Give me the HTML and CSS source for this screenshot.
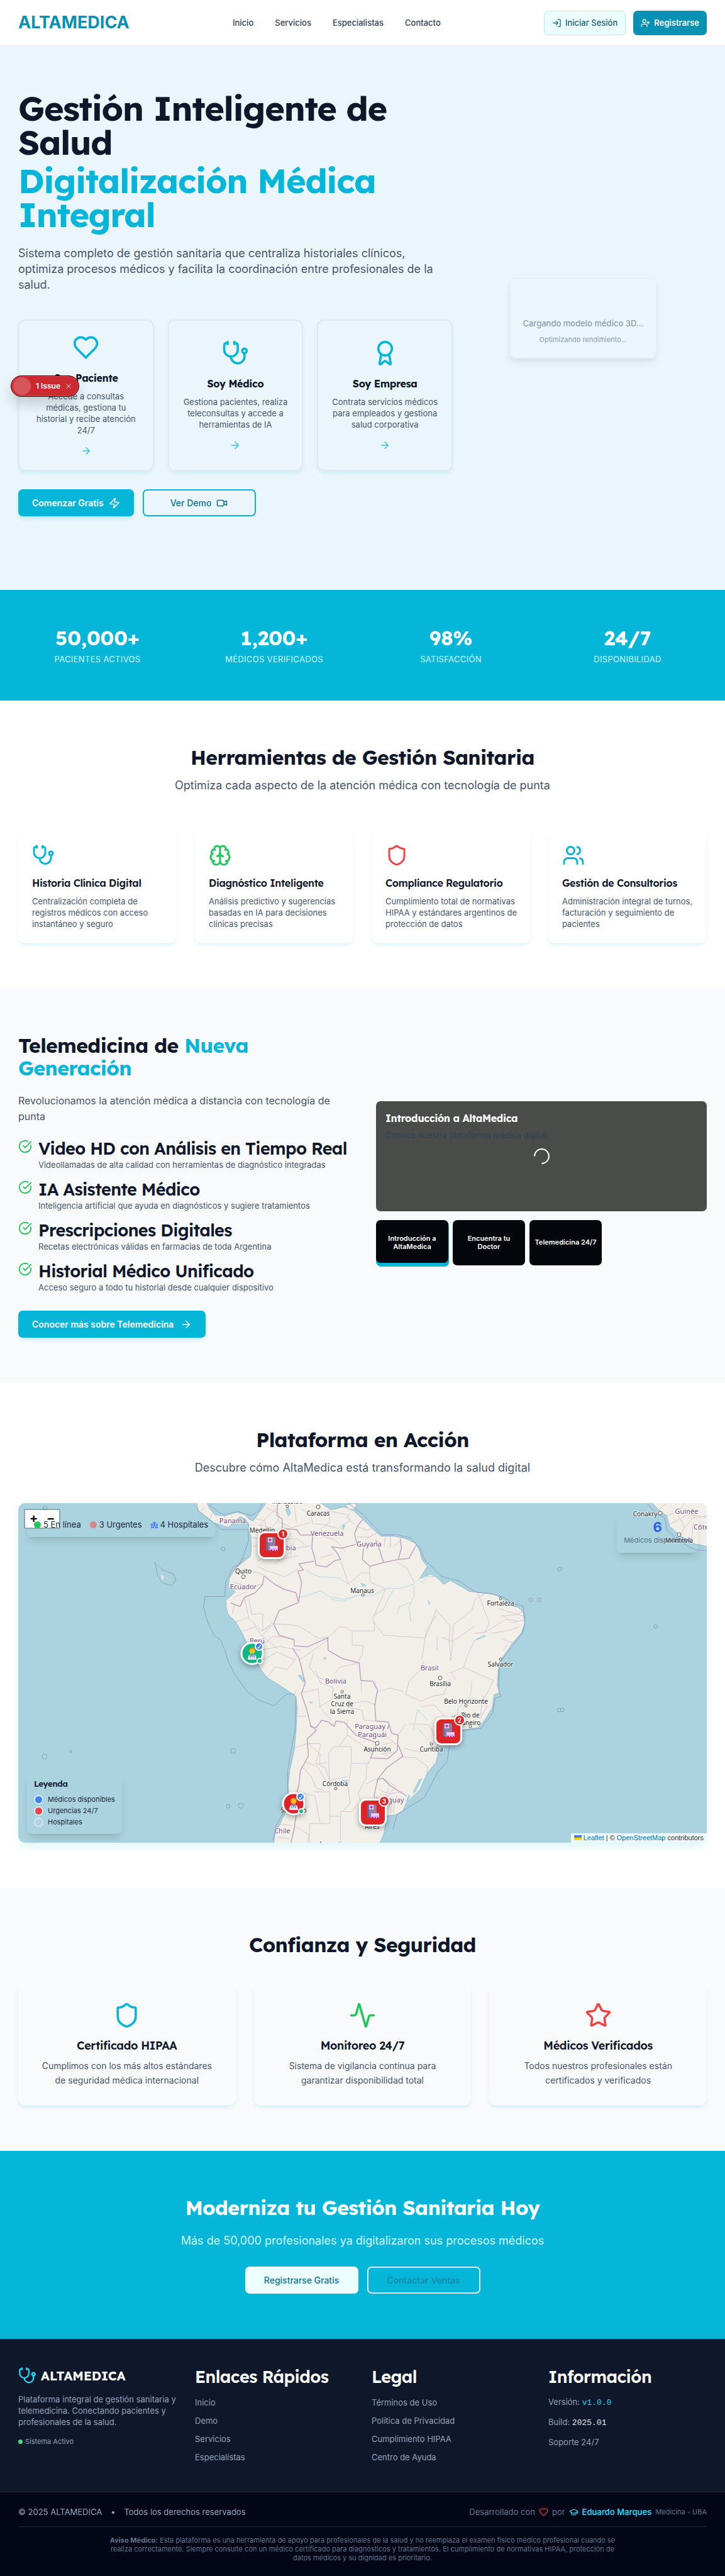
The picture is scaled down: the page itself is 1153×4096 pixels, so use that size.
FILE: index.html
```html
<!DOCTYPE html>
<html lang="es">
<head>
<meta charset="utf-8">
<meta name="viewport" content="width=device-width, initial-scale=1">
<title>ALTAMEDICA</title>
<link rel="stylesheet" href="styles.css">
</head>
<body>
<svg class="sprite" aria-hidden="true">
  <symbol id="i-login" viewBox="0 0 24 24"><path d="M15 3h4a2 2 0 0 1 2 2v14a2 2 0 0 1-2 2h-4M10 17l5-5-5-5M15 12H3"/></symbol>
  <symbol id="i-userplus" viewBox="0 0 24 24"><path d="M16 21v-2a4 4 0 0 0-4-4H6a4 4 0 0 0-4 4v2M19 8v6M22 11h-6"/><circle cx="9" cy="7" r="4"/></symbol>
  <symbol id="i-heart" viewBox="0 0 24 24"><path d="M19 14c1.490-1.460 3-3.210 3-5.500A5.500 5.500 0 0 0 16.500 3c-1.760 0-3 .5-4.500 2-1.500-1.500-2.740-2-4.500-2A5.500 5.500 0 0 0 2 8.500c0 2.300 1.500 4.050 3 5.500l7 7Z"/></symbol>
  <symbol id="i-steth" viewBox="0 0 24 24"><path d="M11 2v2M5 2v2M5 3H4a2 2 0 0 0-2 2v4a6 6 0 0 0 12 0V5a2 2 0 0 0-2-2h-1M8 15a6 6 0 0 0 12 0v-3"/><circle cx="20" cy="10" r="2"/></symbol>
  <symbol id="i-award" viewBox="0 0 24 24"><path d="m15.477 12.890 1.515 8.526a.5.5 0 0 1-.81.47l-3.580-2.687a1 1 0 0 0-1.197 0l-3.586 2.686a.5.5 0 0 1-.81-.469l1.514-8.526"/><circle cx="12" cy="8" r="6"/></symbol>
  <symbol id="i-arrow" viewBox="0 0 24 24"><path d="M5 12h14M12 5l7 7-7 7"/></symbol>
  <symbol id="i-zap" viewBox="0 0 24 24"><path d="M4 14a1 1 0 0 1-.78-1.630l9.900-10.200a.5.5 0 0 1 .86.46l-1.920 6.020A1 1 0 0 0 13 10h7a1 1 0 0 1 .78 1.630l-9.900 10.200a.5.5 0 0 1-.86-.46l1.920-6.020A1 1 0 0 0 11 14z"/></symbol>
  <symbol id="i-video" viewBox="0 0 24 24"><path d="m16 13 5.223 3.482a.5.5 0 0 0 .777-.416V7.870a.5.5 0 0 0-.752-.432L16 10.500"/><rect x="2" y="6" width="14" height="12" rx="2"/></symbol>
  <symbol id="i-brain" viewBox="0 0 24 24"><path d="M12 5a3 3 0 1 0-5.997.125 4 4 0 0 0-2.526 5.770 4 4 0 0 0 .556 6.588A4 4 0 1 0 12 18ZM12 5a3 3 0 1 1 5.997.125 4 4 0 0 1 2.526 5.770 4 4 0 0 1-.556 6.588A4 4 0 1 1 12 18ZM15 13a4.500 4.500 0 0 1-3-4 4.500 4.500 0 0 1-3 4M17.599 6.500a3 3 0 0 0 .399-1.375M6.003 5.125A3 3 0 0 0 6.401 6.500M3.477 10.896a4 4 0 0 1 .585-.396M19.938 10.500a4 4 0 0 1 .585.396M6 18a4 4 0 0 1-1.967-.516M19.967 17.484A4 4 0 0 1 18 18"/></symbol>
  <symbol id="i-shield" viewBox="0 0 24 24"><path d="M20 13c0 5-3.500 7.500-7.660 8.950a1 1 0 0 1-.67-.01C7.500 20.500 4 18 4 13V6a1 1 0 0 1 1-1c2 0 4.500-1.200 6.240-2.720a1.170 1.170 0 0 1 1.520 0C14.510 3.810 17 5 19 5a1 1 0 0 1 1 1z"/></symbol>
  <symbol id="i-users" viewBox="0 0 24 24"><path d="M16 21v-2a4 4 0 0 0-4-4H6a4 4 0 0 0-4 4v2M22 21v-2a4 4 0 0 0-3-3.870M16 3.130a4 4 0 0 1 0 7.750"/><circle cx="9" cy="7" r="4"/></symbol>
  <symbol id="i-check" viewBox="0 0 24 24"><path d="M21.801 10A10 10 0 1 1 17 3.335M9 11l3 3L22 4"/></symbol>
  <symbol id="i-activity" viewBox="0 0 24 24"><path d="M22 12h-2.480a2 2 0 0 0-1.930 1.460l-2.350 8.360a.25.25 0 0 1-.48 0L9.240 2.180a.25.25 0 0 0-.48 0l-2.350 8.360A2 2 0 0 1 4.490 12H2"/></symbol>
  <symbol id="i-star" viewBox="0 0 24 24"><path d="M11.525 2.295a.53.53 0 0 1 .95 0l2.310 4.679a2.123 2.123 0 0 0 1.595 1.160l5.166.756a.53.53 0 0 1 .294.904l-3.736 3.638a2.123 2.123 0 0 0-.611 1.878l.882 5.140a.53.53 0 0 1-.771.56l-4.618-2.428a2.122 2.122 0 0 0-1.973 0L6.396 21.010a.53.53 0 0 1-.77-.56l.881-5.139a2.122 2.122 0 0 0-.611-1.879L2.160 9.795a.53.53 0 0 1 .294-.906l5.165-.755a2.122 2.122 0 0 0 1.597-1.160z"/></symbol>
  <symbol id="i-cap" viewBox="0 0 24 24"><path d="M21.420 10.922a1 1 0 0 0-.019-1.838L12.830 5.180a2 2 0 0 0-1.660 0L2.600 9.080a1 1 0 0 0 0 1.832l8.570 3.908a2 2 0 0 0 1.660 0zM22 10v6M6 12.500V16a6 3 0 0 0 12 0v-3.500"/></symbol>
  <symbol id="i-close" viewBox="0 0 24 24"><path d="M4 4l16 16M20 4L4 20"/></symbol>
</svg>

<header class="topbar">
  <a class="brand" href="#">ALTAMEDICA</a>
  <nav class="nav">
    <a href="#">Inicio</a><a href="#">Servicios</a><a href="#">Especialistas</a><a href="#">Contacto</a>
  </nav>
  <div class="actions">
    <button class="btn-sm btn-login"><svg class="icon"><use href="#i-login"/></svg>Iniciar Sesión</button>
    <button class="btn-sm btn-register"><svg class="icon"><use href="#i-userplus"/></svg>Registrarse</button>
  </div>
</header>

<main>
<section class="hero">
  <div class="hero-copy">
    <h1>Gestión Inteligente de Salud <span>Digitalización Médica Integral</span></h1>
    <p class="lead">Sistema completo de gestión sanitaria que centraliza historiales clínicos, optimiza procesos médicos y facilita la coordinación entre profesionales de la salud.</p>
    <div class="roles">
      <a class="role" href="#"><svg class="icon xl"><use href="#i-heart"/></svg><h2>Soy Paciente</h2><p>Accede a consultas médicas, gestiona tu historial y recibe atención 24/7</p><svg class="icon md"><use href="#i-arrow"/></svg></a>
      <a class="role" href="#"><svg class="icon xl"><use href="#i-steth"/></svg><h2>Soy Médico</h2><p>Gestiona pacientes, realiza teleconsultas y accede a herramientas de IA</p><svg class="icon md"><use href="#i-arrow"/></svg></a>
      <a class="role" href="#"><svg class="icon xl"><use href="#i-award"/></svg><h2>Soy Empresa</h2><p>Contrata servicios médicos para empleados y gestiona salud corporativa</p><svg class="icon md"><use href="#i-arrow"/></svg></a>
    </div>
    <div class="buttons">
      <button class="btn btn-primary">Comenzar Gratis<svg class="icon md"><use href="#i-zap"/></svg></button>
      <button class="btn btn-outline">Ver Demo<svg class="icon md"><use href="#i-video"/></svg></button>
    </div>
  </div>
  <div class="loader">
    <p>Cargando modelo médico 3D...</p>
    <small>Optimizando rendimiento...</small>
  </div>
  <div class="issue">
    <span class="issue-dot"></span><span>1 Issue</span><button aria-label="Cerrar"><svg class="icon"><use href="#i-close"/></svg></button>
  </div>
</section>

<section class="stats">
  <div><strong>50,000+</strong><span>Pacientes Activos</span></div>
  <div><strong>1,200+</strong><span>Médicos Verificados</span></div>
  <div><strong>98%</strong><span>Satisfacción</span></div>
  <div><strong>24/7</strong><span>Disponibilidad</span></div>
</section>

<section class="section">
  <h2 class="title">Herramientas de Gestión Sanitaria</h2>
  <p class="subtitle">Optimiza cada aspecto de la atención médica con tecnología de punta</p>
  <div class="features">
    <article class="card"><svg class="icon lg cyan"><use href="#i-steth"/></svg><h3>Historia Clínica Digital</h3><p>Centralización completa de registros médicos con acceso instantáneo y seguro</p></article>
    <article class="card"><svg class="icon lg green"><use href="#i-brain"/></svg><h3>Diagnóstico Inteligente</h3><p>Análisis predictivo y sugerencias basadas en IA para decisiones clínicas precisas</p></article>
    <article class="card"><svg class="icon lg red"><use href="#i-shield"/></svg><h3>Compliance Regulatorio</h3><p>Cumplimiento total de normativas HIPAA y estándares argentinos de protección de datos</p></article>
    <article class="card"><svg class="icon lg cyan"><use href="#i-users"/></svg><h3>Gestión de Consultorios</h3><p>Administración integral de turnos, facturación y seguimiento de pacientes</p></article>
  </div>
</section>

<section class="section soft tele">
  <div>
    <h2 class="title">Telemedicina de <span>Nueva Generación</span></h2>
    <p class="tele-lead">Revolucionamos la atención médica a distancia con tecnología de punta</p>
    <ul class="checks">
      <li><svg class="icon green"><use href="#i-check"/></svg><div><h3>Video HD con Análisis en Tiempo Real</h3><p>Videollamadas de alta calidad con herramientas de diagnóstico integradas</p></div></li>
      <li><svg class="icon green"><use href="#i-check"/></svg><div><h3>IA Asistente Médico</h3><p>Inteligencia artificial que ayuda en diagnósticos y sugiere tratamientos</p></div></li>
      <li><svg class="icon green"><use href="#i-check"/></svg><div><h3>Prescripciones Digitales</h3><p>Recetas electrónicas válidas en farmacias de toda Argentina</p></div></li>
      <li><svg class="icon green"><use href="#i-check"/></svg><div><h3>Historial Médico Unificado</h3><p>Acceso seguro a todo tu historial desde cualquier dispositivo</p></div></li>
    </ul>
    <button class="btn btn-primary btn-tele">Conocer más sobre Telemedicina<svg class="icon md"><use href="#i-arrow"/></svg></button>
  </div>
  <div>
    <div class="video">
      <h3>Introducción a AltaMedica</h3>
      <p>Conoce nuestra plataforma médica digital</p>
      <span class="spinner"></span>
    </div>
    <div class="thumbs">
      <button class="thumb active">Introducción a AltaMedica</button>
      <button class="thumb">Encuentra tu Doctor</button>
      <button class="thumb">Telemedicina 24/7</button>
    </div>
  </div>
</section>

<section class="section">
  <h2 class="title">Plataforma en Acción</h2>
  <p class="subtitle near">Descubre cómo AltaMedica está transformando la salud digital</p>
  <div class="map">
    <svg class="map-art" viewBox="0 0 1095 540" preserveAspectRatio="xMidYMid slice">
      <defs>
        <g id="hospital">
          <rect x="-22" y="-22" width="44" height="44" rx="11" fill="#fff"/>
          <rect x="-19" y="-19" width="38" height="38" rx="8" fill="#dc2626"/>
          <path d="M-9-10q0-3 3-3h9q3 0 3 3V8H-9z" fill="#8d7fa5"/>
          <path d="M-9-10q0-3 3-3v21h-3z" fill="#70658c"/>
          <rect x="-6" y="-12" width="7" height="7" fill="#fde7f7"/>
          <path d="M-2.500-11v5M-5-8.500h5" stroke="#e0219a" stroke-width="2"/>
          <rect x="-3" y="1" width="13" height="8" fill="#d9b8fb"/>
          <path d="M-2 3.500h11" stroke="#f5eaff" stroke-width="1.500"/>
          <path d="M-2 8h3M3 8h2M7 8h2" stroke="#c81fb0" stroke-width="2"/>
        </g>
        <g id="doctor">
          <path d="M-7 10q0-9 7-9t7 9z" fill="#dfe6f2"/>
          <path d="M-2.500 1h5L0 7z" fill="#5b8fd0"/>
          <path d="M-3 2v5M3 2v5" stroke="#52618a" fill="none"/>
          <circle cx="0" cy="-4" r="4.500" fill="#fcc21b"/>
          <path d="M-4.500-4q-1-5 4.500-5.500Q5.500-9 4.500-4 3-7-1-7q-2 0-3.500 3z" fill="#e59600"/>
        </g>
        <g id="verified"><circle r="6" fill="#3b82f6" stroke="#fff" stroke-width="2"/><path d="M-2.500 1l2 2 3-5.500" fill="none" stroke="#fff" stroke-width="1.300"/></g>
      </defs>
      <rect width="1095" height="540" fill="#aad3df"/>
      <g transform="translate(277 -3) scale(.3444 .3)">
        <path class="coast" d="M5-10L25 50 70 88 100 115 130 125 165 140 190 112 220 82 245 95 262 125 258 150 270 190 272 260 268 292 235 322 210 345 190 370 170 410 165 455 195 480 180 500 155 525 155 560 165 600 200 640 230 700 248 745 265 800 300 855 320 900 345 935 400 975 455 1015 478 1035 484 1100 478 1220 470 1320 450 1420 442 1500 444 1560 425 1660 395 1730 380 1770 375 1820H862L885 1760 892 1710 890 1670 940 1662 972 1640 988 1600 1010 1575 1050 1530 1085 1440 1125 1385 1135 1340 1128 1300 1145 1250 1180 1220 1250 1212 1318 1200 1350 1160 1385 1095 1393 1025 1422 1015 1408 980 1412 905 1420 850 1450 800 1480 750 1518 700 1535 650 1528 590 1505 562 1475 555 1430 515 1390 490 1335 484 1280 478 1245 455 1190 420 1160 440 1130 405 1100 385 1050 410 1085 345 1060 310 1050 262 1028 222 985 198 930 185 870 185 835 150 795 105 765 72 735 42 700 30 640 45 600 15 570-10H350L330 28 305 65 280 105 262 95 240 70 205 58 150 78 105 72 80 40 60-10Z"/>
        <path class="coast" d="M705 22l35-12 18 4-5 28-28 2z"/>
        <path class="lake" d="M428 45l14-22 14 40-14 20zM487 925l12-8 26 40-14 4zM1195 1140l30 20-6-26zM1085 520l14 20-5 15zM695 120l12 8-10 25-8-5zM775 430l28 15-5 10-15-5zM605 830l10-6 5 12-14 6zM1018 1540l30-70 14 2-30 66-12 14zM985 1590l14-36 8 10-14 30zM690 1478h28l-4 14-22-4zM1310 730l40-22 6 6-48 26zM538 1060l22 6-16 8zM180 490l16-22 4 18z"/>
        <path class="river" d="M1120 398L1058 400 1020 440 960 462 900 460 830 500 760 500 700 520 640 510 590 475 530 500 495 510M1098 375l-30 50-20 5M740 440l60 55M520 365l60 35 95 5 45 35M835 610l45-35 25-60 28-50M1010 640l-10-80 25-60-5-55M945 600l10-40 50-25M1085 1160L1040 1105 1020 1210M1225 1160v-60l60-70 5-80M640 520l60 10 60-30M1100 1280l-60-80M850 1000l-8-50M1130 790v-70M1305 735l-30 70-25 80"/>
        <path class="state" d="M80 95l20-50M130 120l25-45M160 135l25-60M205 145l30-55M40 50l20-20M285 90l50 15 5 45 60 20M340 35l60 30-5 40M310 130l30-40 45-50M270 190l45 10 5 60 65 10M400 100l-35 40-60-15M280 240l60-20M300 320l40-30 60 20 85-20M380 330l75-60 15-60M400 200h85l40 35M455 290v-70M300 345l35 20 90 35 60-40M400 110l60 30 80-25M470 20l10 90M500 40l60 40 70-30M545 60l10 60 70 5M630 50l5 60-40 35 5 40 60 20 45 60M640 55l70 15 20 30-60 45-60-20M740 45l-30 40 40 40M755 130l50 25 50-25M760 190h60l30-20M800 205l35-30M480 250l70-15M590 300l60-20M685 320l25 80 10 40 60-60h38v-35M818 380l5 50 70 35-60 155 8 40-2 28H738v75l50 2-5 50-15 30M838 640l45 70 193 15 50-150M940 320l50 35 35 75M890 190l-5 50M915 185v60M930 240l30-30M205 390l45-30 80 30M190 430l60 20 75-10M170 460l60-20M190 510l60-30M195 545l-10 50M240 510l20 110 60 70 40-30M260 520l15 80 50-5v90l45-40M200 640l60-25M230 690l60-25 30 50 50-60M320 710l70 70M250 745l80 10 45-40 95 15M320 790l80-20 100 20M330 840l60-40 80 40M350 930l30-50 60 10 40-60M330 860l-20 40M375 650l110 8 100 70 40-8M625 725l55-60 30 5 25 20M630 730l-90 75-50 40M560 800l-20 80 35 50 60 30M660 910l20-30 85-22M1350 490l-45 30-15 60-85 75-5 90-50-25M1320 490l50 155-20 50-50 5M1350 695l100-70 50 10M1380 700l80-15 50-20M1420 610l80-10 30-20M1415 570l115 40M1430 600l40 45 60-15M1430 730l55 25M1455 760l-20 30M1120 570l70 90-5 80 10 100M1200 745l100-80M1205 745l-15 100M1130 600l-50 85-20 155M1070 845l-20 50-50 60-15 70 70 35 60-30 45-5 30-85M1190 910l60-30 140 70-25 60-25 45-10 80M1195 905l20 40M1330 1150l30-60-20-60M855 1010l60-20 60 20M1000 1180l90 5 20 35 10 40-15 60M1055 1090l60-10 50 60M780 950v60M715 1090l70 20 5 50 60 5M740 1070l60-10 50 20M510 1015l70-20 10 100 40 50 10 15M570 900l20 60 60 30-5 60-60 40M450 1080l30-80M485 1140h40M475 1305l55-20h60v20l-20 90 50-10M530 1280l60 60-5 60 30 15 20 70M715 1160v80l-35 55M655 1300h78v90h85M733 1390l-5 60-10 60 10 90-30 40M655 1300l-25 30v90l5 60 80-20M520 1380l60 30 30 60 30 55M500 1400l50 60 20 60 35 10M515 1550l50 10 20 120 5 30M560 1540h75v130h50v-25h50l30-40M540 1709h95v-40M540 1709v100M683 1665v144M800 1500l50-30M800 1480l5-80 20-40M795 1480l-30 70 15 50 60 40M715 1240l80 60 30 40M970 1355l60 5 60 50-10 30M980 1310l70 20 70-30M985 1180l-30 50M470 1720l70 50-10 39M400 1710l60 10M390 1780l60 10M440 1740l-30 40M880 1470l60 40-30 40M860 1530l50 20 60-10M880 1600l30-90M925 1650l20-90M900 1560l20 90M880 1290l40-10M870 1340l60-10M860 1300l50 60M900 1250l40 40"/>
        <path class="country" d="M395-10l-5 85 25 20v50l65 5 20 30 55-2-3 72 10 40 10 50 48 8 40-35 25-4-20-40-22-28 45 8 72-22-12-55 20-50 22-28M562 318l-70 14 20 33-25 5 18 60-15 107M790 250l-5 60 35 35 62-20-20-75-15-45M882 325l68-16 15-60-5-50M950 309l50-6 32-68M330 395l50 45 40 25 58 20 12 52M330 395l-5 45-35 45-50 25-20 48-42-18M490 537l-90 43-25 70 25 60 70 25v32l60 5 95-47 2 66 68 44 75 22 8 93 55 5 22 45-13 80 5 85 58 5 15 60 30 10-5 82-42 43-80-4 28-80-95-40-55-70-38-5-8 28-30-25-28-8-25 38-24-2-22-100-23-76 18-57-28-130-30-54M550 1190l22 25-42 45 6 90-38 80-6 70-18 90 5 75-10 75-14 70M950 1292l22 60-74 60-45 65 25-10 35 40 75 55M855 1477l-16 80 12 80 42 30M237 300l-30 45-20 30"/>
        <path class="sea" d="M15-10l12 60 108 100h122l2 60-22 75-22 55-24 5-38 85-3 75H58l-6 55 18 80 30 70 32 28 18 52 15 60 35 75 50 80 50 45 75 35 60-62h38M110-10L80 25l60 45 75-15 55 22 35-25 20-45M720 10l45 40 40 40 70 88h70l60 15 45 55 20 60 80 90 80 25 80 60 60 7 60 16 60 40 35 8 12 70-10 70-50 75-60 90-2 150 12 25-30 10-10 80-55 80-75 10-80 28 10 60-12 80-45 60-60 130-65 45-60 45-20 80M478 1035l-5 180-18 110-16 110 2 120-20 95-35 70-15 80"/>
      </g>
      <path class="coast" d="M1003-5L1020 12 1031 20 1036 37 1053 52 1072 64 1100 70V-5Z"/>
      <path class="state" d="M1020 10l14-14M1032 20l20-8 8-14M1036 34l30-16 34 6M1052 50l20-26 26-4M1070 62l4-30M1060 40l-10-20"/>
      <path class="sea" d="M996-5l18 22 14 6 4 20 18 17 26 14 24 2M217 94l12 12 18 7 4 9-7 9-15-4-7-12z"/>
      <path class="galapagos" d="M228 114l3 4-2 4zM235 118l2 2zM240 121l2 2z"/>
      <g class="rings"><circle cx="43" cy="8" r="3"/><circle cx="326" cy="73" r="3"/><circle cx="861" cy="105" r="3"/><circle cx="815" cy="154" r="3"/><circle cx="829" cy="154" r="3"/><circle cx="1014" cy="196" r="3"/><circle cx="860" cy="329" r="3"/><circle cx="865" cy="329" r="3"/><circle cx="83" cy="395" r="2"/><circle cx="42" cy="403" r="4"/><circle cx="342" cy="394" r="4"/><circle cx="334" cy="482" r="3"/><circle cx="354" cy="481" r="4"/></g>
      <g class="towns"><circle cx="428" cy="5" r="2"/><circle cx="477" cy="6" r="3"/><circle cx="358" cy="117" r="3"/><circle cx="548" cy="146" r="2"/><circle cx="767" cy="152" r="2"/><circle cx="767" cy="248" r="2"/><circle cx="671" cy="278" r="3"/><circle cx="515" cy="300" r="2"/><circle cx="712" cy="322" r="2"/><circle cx="719" cy="355" r="2"/><circle cx="657" cy="383" r="2"/><circle cx="571" cy="382" r="3"/><circle cx="505" cy="454" r="2"/><circle cx="1021" cy="16" r="3"/><circle cx="1051" cy="50" r="3"/></g>
      <g class="lands"><text x="341" y="32">Panamá</text><text x="491" y="52">Venezuela</text><text x="417" y="75">Colombia</text><text x="558" y="69">Guyana</text><text x="358" y="137">Ecuador</text><text x="380" y="223">Perú</text><text x="654" y="266">Brasil</text><text x="505" y="287">Bolivia</text><text x="563" y="359">Paraguay /</text><text x="563" y="372">Paraguái</text><text x="591" y="476">Uruguay</text><text x="420" y="525">Chile</text><text x="503" y="546">Argentina</text><text x="1063" y="17">Guinée</text><text x="1086" y="42">Côte</text></g>
      <g class="cities"><text x="428" y="1">Maracaibo</text><text x="477" y="20">Caracas</text><text x="388" y="47">Medellín</text><text x="358" y="112">Quito</text><text x="547" y="143">Manaus</text><text x="767" y="163">Fortaleza</text><text x="767" y="260">Salvador</text><text x="671" y="291">Brasília</text><text x="515" y="311">Santa</text><text x="515" y="323">Cruz de</text><text x="515" y="335">la Sierra</text><text x="712" y="319">Belo Horizonte</text><text x="719" y="341">Rio de</text><text x="719" y="353">Janeiro</text><text x="657" y="395">Curitiba</text><text x="571" y="395">Asunción</text><text x="504" y="450">Córdoba</text><text x="438" y="492">Santiago</text><text x="563" y="507">Buenos</text><text x="563" y="518">Aires</text><text x="997" y="21">Conakry</text><text x="1051" y="63">Monrovia</text></g>
      <g class="pins">
        <g transform="translate(403 67)"><use href="#hospital"/><circle class="count" cx="18" cy="-18" r="8"/><text x="18" y="-14">1</text></g>
        <g transform="translate(684 363)"><use href="#hospital"/><circle class="count" cx="18" cy="-18" r="8"/><text x="18" y="-14">2</text></g>
        <g transform="translate(564 492)"><use href="#hospital"/><circle class="count" cx="18" cy="-18" r="8"/><text x="18" y="-14">3</text></g>
        <g transform="translate(372 239)"><circle r="17" fill="#10b981" stroke="#fff" stroke-width="3"/><use href="#doctor"/><use href="#verified" x="11" y="-11"/><circle cx="12" cy="12" r="4" fill="#10b981" stroke="#fff" stroke-width="2"/></g>
        <g transform="translate(438 478)"><circle r="17" fill="#dc2626" stroke="#fff" stroke-width="3"/><use href="#doctor"/><use href="#verified" x="11" y="-11"/><circle cx="12" cy="12" r="4" fill="#10b981" stroke="#fff" stroke-width="2"/></g>
      </g>
    </svg>
    <div class="zoomer"><button aria-label="Acercar">+</button><button aria-label="Alejar">−</button></div>
    <div class="panel counts">
      <span><i class="dot on"></i>5 En línea</span>
      <span><i class="dot urgent"></i>3 Urgentes</span>
      <span><svg class="mini" viewBox="0 0 12 12"><path d="M3 1h6v3h3v8H7V9H5v3H0V4h3z" fill="#4f86ee"/><path d="M4 2v7M8 2v7M2 6v4M10 6v4" stroke="#a9c8f5"/></svg>4 Hospitales</span>
    </div>
    <div class="panel doctors"><strong>6</strong><span>Médicos disponibles</span></div>
    <div class="panel legend">
      <h4>Leyenda</h4>
      <ul><li><i class="key blue"></i>Médicos disponibles</li><li><i class="key redkey"></i>Urgencias 24/7</li><li><i class="key"></i>Hospitales</li></ul>
    </div>
    <div class="credit"><svg class="flag" viewBox="0 0 12 8"><path fill="#4c7be1" d="M0 0h12v4H0z"/><path fill="#ffd500" d="M0 4h12v4H0z"/></svg> <a href="#">Leaflet</a> | © <a href="#">OpenStreetMap</a> contributors</div>
  </div>
</section>

<section class="section soft">
  <h2 class="title">Confianza y Seguridad</h2>
  <div class="trust">
    <article class="card"><svg class="icon xl cyan"><use href="#i-shield"/></svg><h3>Certificado HIPAA</h3><p>Cumplimos con los más altos estándares de seguridad médica internacional</p></article>
    <article class="card"><svg class="icon xl green"><use href="#i-activity"/></svg><h3>Monitoreo 24/7</h3><p>Sistema de vigilancia continua para garantizar disponibilidad total</p></article>
    <article class="card"><svg class="icon xl red"><use href="#i-star"/></svg><h3>Médicos Verificados</h3><p>Todos nuestros profesionales están certificados y verificados</p></article>
  </div>
</section>

<section class="section cta">
  <h2 class="title">Moderniza tu Gestión Sanitaria Hoy</h2>
  <p class="subtitle">Más de 50,000 profesionales ya digitalizaron sus procesos médicos</p>
  <div class="buttons">
    <button class="btn btn-light">Registrarse Gratis</button>
    <button class="btn btn-ghost">Contactar Ventas</button>
  </div>
</section>
</main>

<footer class="footer">
  <div class="footer-cols">
    <div>
      <div class="footer-brand"><svg class="icon"><use href="#i-steth"/></svg>ALTAMEDICA</div>
      <p>Plataforma integral de gestión sanitaria y telemedicina. Conectando pacientes y profesionales de la salud.</p>
      <div class="status"><i></i>Sistema Activo</div>
    </div>
    <div>
      <h3>Enlaces Rápidos</h3>
      <ul class="links"><li><a href="#">Inicio</a></li><li><a href="#">Demo</a></li><li><a href="#">Servicios</a></li><li><a href="#">Especialistas</a></li></ul>
    </div>
    <div>
      <h3>Legal</h3>
      <ul class="links"><li><a href="#">Términos de Uso</a></li><li><a href="#">Política de Privacidad</a></li><li><a href="#">Cumplimiento HIPAA</a></li><li><a href="#">Centro de Ayuda</a></li></ul>
    </div>
    <div>
      <h3>Información</h3>
      <ul class="info"><li>Versión: <code class="ver">v1.0.0</code></li><li>Build: <code>2025.01</code></li><li>Soporte 24/7</li></ul>
    </div>
  </div>
  <div class="footer-bottom">
    <div class="legal-row">
      <div class="rights"><span>© 2025 ALTAMEDICA</span><span>•</span><span>Todos los derechos reservados</span></div>
      <div class="made"><span>Desarrollado con</span><svg class="icon heart"><use href="#i-heart"/></svg><span>por</span><a href="#"><svg class="icon"><use href="#i-cap"/></svg>Eduardo Marques</a><small>Medicina - UBA</small></div>
    </div>
    <p class="notice"><strong>Aviso Médico:</strong> Esta plataforma es una herramienta de apoyo para profesionales de la salud y no reemplaza el examen físico médico profesional cuando se realiza correctamente. Siempre consulte con un médico certificado para diagnósticos y tratamientos. El cumplimiento de normativas HIPAA, protección de datos médicos y su dignidad es prioritario.</p>
  </div>
</footer>
</body>
</html>
```
FILE: styles.css
```css
:root {
  --cyan: #06b6d8;
  --ink: #0f172a;
  --text: #475569;
  --display: Lexend, Inter, "Open Sans", sans-serif;
}
* { box-sizing: border-box; margin: 0; padding: 0; }
body { font-family: Inter, "Liberation Sans", sans-serif; font-size: 13px; line-height: 18px; color: var(--text); background: #fff; }
a { color: inherit; text-decoration: none; }
ul { list-style: none; }
button { font: inherit; cursor: pointer; border: 0; background: none; }
h1, h2, h3, h4 { font-family: var(--display); color: var(--ink); letter-spacing: -.02em; }
.sprite { position: absolute; width: 0; height: 0; }
.icon { width: 15px; height: 15px; flex: none; fill: none; stroke: currentColor; stroke-width: 2; stroke-linecap: round; stroke-linejoin: round; }
.icon.md { width: 18px; height: 18px; }
.icon.lg { width: 36px; height: 36px; }
.icon.xl { width: 43px; height: 43px; }
.cyan { color: var(--cyan); }
.green { color: #22c55e; }
.red { color: #ef4444; }

.topbar { display: flex; justify-content: space-between; align-items: center; height: 73px; padding: 0 29px; border-bottom: 1px solid #e2e8f0; }
.brand { font-size: 27px; line-height: 32px; font-weight: 700; color: #0891b2; }
.nav { display: flex; gap: 34px; font-weight: 500; color: #334155; }
.actions { display: flex; gap: 12px; }
.btn-sm { display: flex; align-items: center; gap: 6px; height: 39px; padding: 0 12px; border-radius: 7px; font-weight: 500; white-space: nowrap; }
.btn-login { background: #ecfeff; border: 1px solid #a5f3fc; color: #155e75; }
.btn-register { background: #0891b2; color: #fff; font-weight: 600; }

.hero { position: relative; display: grid; grid-template-columns: 691fr 393fr; gap: 11px; min-height: 865px; padding: 72px 29px; background: #eaf6fb; }
h1 { font-size: 54px; line-height: 54px; font-weight: 700; letter-spacing: -.025em; }
h1 span { display: block; margin-top: 7px; color: var(--cyan); }
.lead { margin-top: 22px; font-size: 18px; line-height: 25px; }
.roles { display: grid; grid-template-columns: repeat(3, 1fr); gap: 22px; margin-top: 43px; }
.role { display: flex; flex-direction: column; align-items: center; justify-content: center; min-height: 241px; padding: 20px; border: 2px solid #e2e8f0; border-radius: 11px; text-align: center; box-shadow: 0 4px 6px -1px rgba(6, 182, 216, .14); }
.role .icon { color: var(--cyan); }
.role h2 { margin: 15px 0 7px; font-size: 16px; line-height: 25px; font-weight: 700; }
.role .md { margin-top: 15px; opacity: .8; }
.buttons { display: flex; gap: 14px; }
.hero .buttons { margin-top: 29px; }
.btn { display: flex; align-items: center; justify-content: center; gap: 8px; height: 43px; min-width: 180px; padding: 0 22px; border-radius: 7px; font-size: 14px; font-weight: 500; }
.btn-primary { background: var(--cyan); color: #fff; font-weight: 600; box-shadow: 0 4px 6px -1px rgba(6, 182, 216, .2); }
.btn-outline { border: 2px solid var(--cyan); color: #0e7490; }
.loader { place-self: center; display: flex; flex-direction: column; gap: 9px; padding: 62px 20px 21px; border: 1px solid #e3edf3; border-radius: 11px; text-align: center; color: #8c9dac; box-shadow: 0 9px 14px -3px rgba(15, 23, 42, .08), 0 3px 5px rgba(15, 23, 42, .03); }
.loader p { font-weight: 500; }
.loader small { font-size: 11px; line-height: 16px; }
.issue { position: absolute; left: 17px; top: 524px; display: flex; align-items: center; gap: 8px; width: 109px; height: 34px; padding: 2px 10px 2px 3px; border: 1px solid #2b1013; border-radius: 17px; background: #ca2a30; box-shadow: inset 0 0 0 1px #e5484d, 0 12px 20px rgba(15, 23, 42, .18); color: #fff; font-size: 12px; font-weight: 600; white-space: nowrap; }
.issue-dot { flex: none; width: 28px; height: 28px; border-radius: 50%; background: #d6555b; }
.issue button { display: flex; color: #fff; }
.issue .icon { width: 10px; height: 10px; }

.stats { display: grid; grid-template-columns: repeat(4, 1fr); gap: 29px; padding: 58px 29px 57px; background: var(--cyan); text-align: center; color: #cffafe; }
.stats strong { display: block; margin-bottom: 7px; font: 700 32px/36px var(--display); color: #fff; }
.stats span { display: block; text-transform: uppercase; letter-spacing: .025em; }

.section { padding: 72px 29px; }
.soft { background: #f8fafc; }
.title { font-size: 32px; line-height: 36px; font-weight: 700; text-align: center; }
.subtitle { margin: 14px 0 59px; font-size: 18px; line-height: 25px; text-align: center; }
.subtitle.near { margin-bottom: 44px; }
.features { display: grid; grid-template-columns: repeat(4, 1fr); gap: 29px; }
.card { padding: 22px 18px 22px 22px; border-radius: 11px; box-shadow: 0 4px 6px -1px rgba(6, 182, 216, .13), 0 2px 4px -2px rgba(6, 182, 216, .1); }
.card .icon { display: block; }
.features h3 { margin: 14px 0 7px; font-size: 16px; line-height: 25px; font-weight: 600; }

.tele { display: grid; grid-template-columns: minmax(0, 1fr) minmax(0, 1fr); gap: 43px; align-items: center; }
.tele .title { text-align: left; }
.tele .title span { color: var(--cyan); }
.tele-lead { margin: 22px 0; font-size: 16px; line-height: 25px; }
.checks { display: grid; gap: 14px; }
.checks li { display: flex; gap: 10px; }
.checks .icon { width: 22px; height: 22px; margin-top: 2px; }
.checks h3 { font-size: 27px; line-height: 33px; font-weight: 600; letter-spacing: -.025em; white-space: nowrap; }
.btn-tele { margin-top: 28px; gap: 11px; }
.video { position: relative; height: 175px; padding: 15px; border-radius: 7px; background: #4a4c4a; }
.video h3 { font-size: 16px; line-height: 25px; color: #fff; }
.video p { margin-top: 5px; color: #334155; }
.spinner { position: absolute; inset: 0; width: 25px; height: 25px; margin: auto; border: 2px solid #fff; border-left-color: transparent; border-radius: 50%; transform: rotate(-45deg); }
.thumbs { display: flex; gap: 7px; margin-top: 14px; padding-bottom: 9px; }
.thumb { width: 115px; height: 72px; padding: 0 8px; border-radius: 7px; background: #03070b; color: #fff; font-size: 11px; line-height: 13px; font-weight: 600; }
.thumb.active { box-shadow: inset 0 -4px 0 var(--cyan), 1px 2px 0 var(--cyan); }

.map { position: relative; height: 540px; border-radius: 11px; overflow: hidden; box-shadow: 0 9px 14px -3px rgba(6, 182, 216, .14); }
.map-art { display: block; width: 100%; height: 100%; font-family: "Noto Sans", sans-serif; text-anchor: middle; }
.coast { fill: #f2efe9; stroke: #8fb9cd; stroke-width: 1; vector-effect: non-scaling-stroke; }
.lake { fill: #aad3df; }
.river, .state, .country, .sea { fill: none; vector-effect: non-scaling-stroke; stroke-linejoin: round; }
.river { stroke: #b4dbe6; stroke-width: 1; }
.state { stroke: #d6c5d3; stroke-width: 1; }
.country { stroke: #bda4bf; stroke-width: 1.5; }
.sea { stroke: #8e9fbf; stroke-width: 1; }
.galapagos { fill: #f2efe9; stroke: #f2efe9; }
.rings { fill: none; stroke: #8e9fbf; }
.towns { fill: #fff; stroke: #555; }
.lands, .cities { paint-order: stroke; stroke: #fff; stroke-opacity: .75; stroke-width: 2; stroke-linejoin: round; }
.lands { font-size: 11px; fill: #734d7b; }
.cities { font-size: 10px; fill: #222; }
.pins > g { filter: drop-shadow(0 3px 4px rgba(0, 0, 0, .35)); }
.pins text { fill: #fff; font: 700 10px Inter, sans-serif; }
.count { fill: #dc2626; stroke: #fff; stroke-width: 2; }
.zoomer { position: absolute; left: 9px; top: 9px; display: flex; width: 58px; height: 32px; border: 2px solid rgba(0, 0, 0, .2); border-radius: 2px; background: #fff; background-clip: padding-box; }
.zoomer button { flex: 1; font: 700 20px/24px "Liberation Sans", sans-serif; color: #000; }
.panel { position: absolute; border-radius: 7px; box-shadow: 0 9px 14px -3px rgba(0, 0, 0, .12), 0 4px 5px -4px rgba(0, 0, 0, .12); color: #1e293b; }
.counts { left: 14px; top: 14px; display: flex; align-items: center; gap: 14px; height: 40px; padding: 0 11px; }
.counts span { display: flex; align-items: center; gap: 4px; }
.dot { width: 11px; height: 11px; border-radius: 50%; }
.on { background: #22c55e; }
.urgent { background: #d0878c; }
.mini { width: 11px; height: 11px; }
.doctors { right: 14px; top: 14px; padding: 11px; height: 65px; text-align: center; font-size: 11px; line-height: 15px; color: #5a7488; }
.doctors strong { display: block; font: 700 22px/27px Inter, sans-serif; color: #2563eb; }
.legend { left: 14px; bottom: 14px; padding: 7px 11px 10px; font-size: 11px; }
.legend h4 { margin-bottom: 7px; font-size: 13px; line-height: 18px; font-weight: 600; }
.legend li { display: flex; align-items: center; gap: 7px; }
.key { width: 15px; height: 15px; border: 2px solid #dbe9ee; border-radius: 50%; }
.blue { background: #3b82f6; }
.redkey { background: #ef4444; }
.credit { position: absolute; right: 0; bottom: 0; padding: 0 5px; background: rgba(255, 255, 255, .8); font: 11px/15px "Liberation Sans", sans-serif; color: #333; }
.credit a { color: #0078a8; }
.flag { width: 12px; height: 8px; }

.trust { display: grid; grid-template-columns: repeat(3, 1fr); gap: 29px; margin-top: 44px; }
.trust .card { padding: 29px; text-align: center; }
.trust .icon { margin: 0 auto; }
.trust h3 { margin: 14px 0 8px; font-size: 18px; line-height: 25px; font-weight: 600; }
.trust p { font-size: 14px; line-height: 23px; }

.cta { background: var(--cyan); }
.cta .title { color: #fff; }
.cta .subtitle { margin: 22px 0 29px; color: #cffafe; }
.cta .buttons { justify-content: center; }
.btn-light { background: #ecfeff; color: #0e7490; }
.btn-ghost { border: 2px solid #e2e8f0; color: #0e88a8; }

.footer { background: var(--ink); color: #94a3b8; }
.footer-cols { display: grid; grid-template-columns: repeat(4, 1fr); gap: 29px; padding: 44px 29px; }
.footer-brand { display: flex; align-items: center; gap: 7px; margin-bottom: 14px; font: 700 20px/29px var(--display); color: #fff; }
.footer-brand .icon { width: 29px; height: 29px; color: #22d3ee; }
.status { display: flex; align-items: center; gap: 4px; margin-top: 14px; font-size: 11px; line-height: 16px; }
.status i { width: 7px; height: 7px; border-radius: 50%; background: #4ade80; }
.footer h3 { margin-bottom: 14px; font-size: 27px; line-height: 33px; font-weight: 600; color: #fff; }
.links { display: grid; gap: 8px; line-height: 21px; }
.info { display: grid; gap: 12px; }
code { font: 13px/18px "Liberation Mono", monospace; color: #e2e8f0; }
code.ver { color: #22d3ee; }
.footer-bottom { padding: 22px 29px; border-top: 1px solid #1e293b; background: #020617; }
.legal-row { display: flex; justify-content: space-between; align-items: center; padding-bottom: 14px; border-bottom: 1px solid #1e293b; }
.rights { display: flex; gap: 14px; }
.made { display: flex; align-items: center; gap: 6px; color: #64748b; }
.made a { display: flex; align-items: center; gap: 6px; font-weight: 600; color: #22d3ee; }
.made small { font-size: 11px; }
.made .heart { color: #dc3540; }
.notice { max-width: 810px; margin: 14px auto 0; font-size: 11px; line-height: 14px; text-align: center; color: #64748b; }
```
